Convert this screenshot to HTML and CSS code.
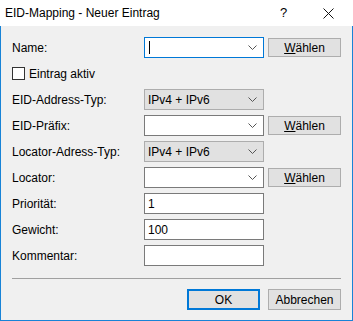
FILE: index.html
```html
<!DOCTYPE html>
<html lang="de">
<head>
    <meta charset="UTF-8">
    <title>EID-Mapping - Neuer Eintrag</title>
    <link rel="stylesheet" href="styles.css">
</head>
<body>
    <div class="window">
        <div class="titlebar">
            <span class="title">EID-Mapping - Neuer Eintrag</span>
            <span class="help">?</span>
            <span class="close">
                <svg width="11" height="11" viewBox="0 0 11 11">
                    <path d="M0.5 0.5 L10.5 10.5 M10.5 0.5 L0.5 10.5" stroke="#111" stroke-width="1" fill="none"/>
                </svg>
            </span>
        </div>

        <div class="content">
            <div class="form">
                <label class="lbl">Name:</label>
                <div class="combo focused">
                    <span class="caret"></span>
                    <span class="val"></span>
                    <svg class="chev" width="9" height="5" viewBox="0 0 9 5"><path d="M0.5 0.5 L4.5 4.5 L8.5 0.5" stroke="#555" fill="none"/></svg>
                </div>
                <button class="btn"><u>W</u>ählen</button>

                <label class="check-row">
                    <span class="checkbox"></span>
                    <span>Eintrag aktiv</span>
                </label>

                <label class="lbl">EID-Address-Typ:</label>
                <div class="combo list">
                    <span class="val">IPv4 + IPv6</span>
                    <svg class="chev" width="9" height="5" viewBox="0 0 9 5"><path d="M0.5 0.5 L4.5 4.5 L8.5 0.5" stroke="#555" fill="none"/></svg>
                </div>
                <span></span>

                <label class="lbl">EID-Präfix:</label>
                <div class="combo">
                    <span class="val"></span>
                    <svg class="chev" width="9" height="5" viewBox="0 0 9 5"><path d="M0.5 0.5 L4.5 4.5 L8.5 0.5" stroke="#555" fill="none"/></svg>
                </div>
                <button class="btn"><u>W</u>ählen</button>

                <label class="lbl">Locator-Adress-Typ:</label>
                <div class="combo list">
                    <span class="val">IPv4 + IPv6</span>
                    <svg class="chev" width="9" height="5" viewBox="0 0 9 5"><path d="M0.5 0.5 L4.5 4.5 L8.5 0.5" stroke="#555" fill="none"/></svg>
                </div>
                <span></span>

                <label class="lbl">Locator:</label>
                <div class="combo">
                    <span class="val"></span>
                    <svg class="chev" width="9" height="5" viewBox="0 0 9 5"><path d="M0.5 0.5 L4.5 4.5 L8.5 0.5" stroke="#555" fill="none"/></svg>
                </div>
                <button class="btn"><u>W</u>ählen</button>

                <label class="lbl">Priorität:</label>
                <div class="field">1</div>
                <span></span>

                <label class="lbl">Gewicht:</label>
                <div class="field">100</div>
                <span></span>

                <label class="lbl">Kommentar:</label>
                <div class="field"></div>
                <span></span>
            </div>

            <div class="separator"></div>

            <div class="actions">
                <button class="btn default">OK</button>
                <button class="btn">Abbrechen</button>
            </div>
        </div>
    </div>
</body>
</html>
```

FILE: styles.css
```css
/* Dialog im Windows-10-Stil */
html, body {
    margin: 0;
    padding: 0;
    background: #f0f0f0;
    font-family: 'Liberation Sans', Arial, sans-serif;
    font-size: 12px;
    color: #000;
}

* {
    box-sizing: border-box;
}

.window {
    width: 353px;
    height: 321px;
    display: flex;
    flex-direction: column;
}

.titlebar {
    height: 26px;
    background: #fff;
    display: flex;
    align-items: center;
    position: relative;
}

.title {
    padding-left: 5px;
    font-size: 12px;
}

.help {
    position: absolute;
    left: 280px;
    top: 5px;
    font-size: 13px;
}

.close {
    position: absolute;
    left: 323px;
    top: 8px;
    line-height: 0;
}

.content {
    flex: 1;
    background: #f0f0f0;
    border: 1px solid #1883d7;
    border-top: none;
    padding: 11px 11px 10px 11px;
}

.form {
    display: grid;
    grid-template-columns: 128px 120px 73px;
    column-gap: 4px;
    row-gap: 5px;
    grid-auto-rows: 21px;
    align-items: center;
}

.lbl {
    white-space: nowrap;
}

.check-row {
    grid-column: 1 / 4;
    display: flex;
    align-items: center;
    gap: 4px;
}

.checkbox {
    width: 13px;
    height: 13px;
    background: #fff;
    border: 1px solid #333;
}

.combo, .field {
    height: 21px;
    background: #fff;
    border: 1px solid #7a7a7a;
    display: flex;
    align-items: center;
    padding-left: 3px;
}

.combo.focused {
    border-color: #0078d7;
}

.combo.list {
    background: #e1e1e1;
    border-color: #adadad;
}

.combo .val {
    flex: 1;
}

.caret {
    width: 1px;
    height: 13px;
    background: #000;
    margin-left: 1px;
}

.chev {
    margin-right: 6px;
}

.btn {
    height: 19px;
    margin: 0;
    padding: 0;
    background: #e1e1e1;
    border: 1px solid #adadad;
    font-family: inherit;
    font-size: 12px;
    color: #000;
}

.btn u {
    text-decoration-thickness: 1px;
}

.separator {
    margin-top: 12px;
    height: 1px;
    background: #a0a0a0;
}

.actions {
    margin-top: 10px;
    display: flex;
    justify-content: flex-end;
    gap: 8px;
}

.actions .btn {
    width: 73px;
    height: 21px;
}

.btn.default {
    border: 2px solid #0078d7;
}
```
